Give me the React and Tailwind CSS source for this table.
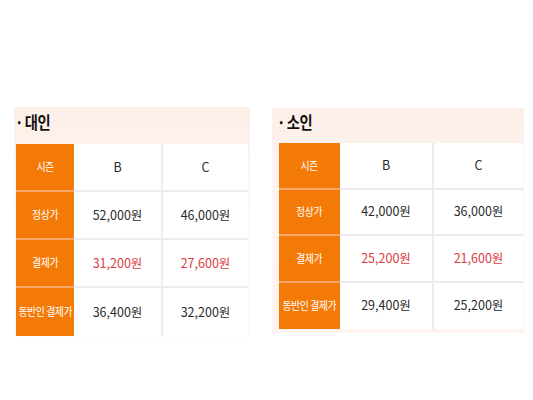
import React from "react";

const font = { fontFamily: '"Noto Sans CJK KR", "Noto Sans", sans-serif' };

function Panel({ title, rows, wrap, titleH, rowH, c1, c2, c3, tableMx }) {
  return (
    <div className={wrap}>
      <div className={`${titleH} flex items-start text-[17px] leading-[18px] font-bold text-[#111]`}>
        <span className="inline-block origin-left scale-x-[0.84] whitespace-nowrap tracking-tight">
          <span className="mr-[2px]">·</span>
          {title}
        </span>
      </div>
      <div className={`${tableMx} flex flex-col text-[12.5px] text-[#2a2a2a]`}>
        {rows.map((r, i) => (
          <div key={i} className={`flex ${rowH}`}>
            <div
              className={`${c1} shrink-0 bg-[#f47a08] text-white text-[11.5px] flex items-center justify-center whitespace-nowrap ${
                i < rows.length - 1 ? "border-b-2 border-[#f7a869]" : ""
              }`}
            >
              <span className="inline-block scale-x-[0.86] tracking-[-0.5px]">{r[0]}</span>
            </div>
            <div
              className={`${c2} shrink-0 bg-white flex items-center justify-center border-r-2 border-[#ececec] ${
                i < rows.length - 1 ? "border-b-2" : ""
              } ${r[3] ? "text-[#dc3b3f]" : ""}`}
            >
              {r[1]}
            </div>
            <div
              className={`${c3} shrink-0 bg-white flex items-center justify-center border-[#ececec] ${
                i < rows.length - 1 ? "border-b-2" : ""
              } ${r[3] ? "text-[#dc3b3f]" : ""}`}
            >
              {r[2]}
            </div>
          </div>
        ))}
      </div>
    </div>
  );
}

export default function App() {
  return (
    <div className="w-[533px] h-[400px] bg-white flex items-start" style={font}>
      <div className="mt-[107px] ml-[14px]">
        <Panel
          title="대인"
          wrap="w-[236px] bg-gradient-to-b from-[#fdefe8] via-[#fff7f3] to-[#fffaf8] pb-[1px]"
          titleH="h-[37px] pl-[1px] pt-[6px]"
          tableMx="ml-[2px] mr-[2px]"
          rowH="h-[48px]"
          c1="w-[58px]"
          c2="w-[89px]"
          c3="w-[85px]"
          rows={[
            ["시즌", "B", "C"],
            ["정상가", "52,000원", "46,000원"],
            ["결제가", "31,200원", "27,600원", true],
            ["동반인 결제가", "36,400원", "32,200원"],
          ]}
        />
      </div>
      <div className="mt-[108px] ml-[22px]">
        <Panel
          title="소인"
          wrap="w-[252px] bg-gradient-to-b from-[#fdefe8] via-[#fff6f2] to-[#fff3ee] pb-[4px]"
          titleH="h-[35px] pl-[5px] pt-[5px]"
          tableMx="ml-[7px] mr-[1px]"
          rowH="h-[46.5px]"
          c1="w-[61px]"
          c2="w-[94px]"
          c3="w-[89px]"
          rows={[
            ["시즌", "B", "C"],
            ["정상가", "42,000원", "36,000원"],
            ["결제가", "25,200원", "21,600원", true],
            ["동반인 결제가", "29,400원", "25,200원"],
          ]}
        />
      </div>
    </div>
  );
}
